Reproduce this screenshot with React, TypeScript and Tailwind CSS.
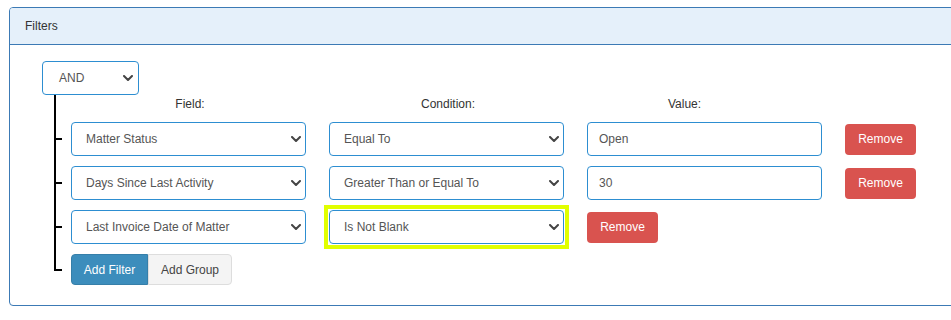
import React from "react";

const Chevron = () => (
  <svg width="10" height="6" viewBox="0 0 10 6" className="shrink-0">
    <path d="M1 1 L5 5 L9 1" stroke="#444" strokeWidth="2" fill="none" strokeLinecap="round" strokeLinejoin="round" />
  </svg>
);

const Select = ({ text, w = "w-[235px]" }: { text: string; w?: string }) => (
  <div className={`flex h-[34px] ${w} items-center justify-between rounded-[4px] border border-[#2d8ed1] bg-white pl-[14px] pr-[4px] text-[12px] text-[#555]`}>
    <span>{text}</span>
    <Chevron />
  </div>
);

const Input = ({ value }: { value: string }) => (
  <div className="flex h-[34px] w-[235px] items-center rounded-[4px] border border-[#2d8ed1] bg-white pl-[11px] text-[12px] text-[#555]">
    {value}
  </div>
);

const RemoveBtn = () => (
  <div className="flex h-[31px] w-[71px] items-center justify-center rounded-[4px] bg-[#d9534f] text-[12px] text-white">
    Remove
  </div>
);

const Row = ({ children }: { children: React.ReactNode }) => (
  <div className="pb-[10px]">
    <div className="flex h-[34px] items-center">
      <div className="h-[2px] w-[6px] bg-black" />
      <div className="ml-[9px] flex items-center gap-[23px]">{children}</div>
    </div>
  </div>
);

export default function App() {
  return (
    <div className="h-[320px] w-[951px] overflow-hidden bg-white pl-[9px] pt-[7px] font-['Liberation_Sans',Arial,sans-serif]">
      <div className="w-[960px] rounded-[4px] border border-[#3c7ab5]">
        <div className="flex h-[37px] items-center rounded-t-[3px] border-b border-[#3c7ab5] bg-[#e5f0fa] pl-[15px] text-[12px] text-[#333]">
          Filters
        </div>
        <div className="pb-[20px] pl-[32px] pt-[16px]">
          <Select text="AND" w="w-[97px] !pl-[16px] !pr-[5px]" />
          <div className="ml-[12px]">
            <div className="border-l-2 border-black">
              <div className="flex h-[27px] pl-[15px] text-[12px] text-[#333]">
                <div className="w-[235px] pl-[3px] text-center">Field:</div>
                <div className="ml-[23px] w-[235px] pl-[3px] text-center">Condition:</div>
                <div className="ml-[23px] w-[235px] pr-[40px] text-center">Value:</div>
              </div>
              <Row>
                <Select text="Matter Status" />
                <Select text="Equal To" />
                <Input value="Open" />
                <RemoveBtn />
              </Row>
              <Row>
                <Select text="Days Since Last Activity" />
                <Select text="Greater Than or Equal To" />
                <Input value="30" />
                <RemoveBtn />
              </Row>
              <Row>
                <Select text="Last Invoice Date of Matter" />
                <div className="rounded-none outline-4 outline-solid outline-offset-1 outline-[#e1ff00]">
                  <Select text="Is Not Blank" />
                </div>
                <RemoveBtn />
              </Row>
            </div>
            <div className="flex h-[31px]">
              <div className="h-[17px] w-[8px] border-b-2 border-l-2 border-black" />
              <div className="ml-[9px] flex">
                <div className="flex h-[31px] w-[77px] items-center justify-center rounded-l-[4px] border border-[#367fa9] bg-[#3c8dbc] text-[12px] text-white">
                  Add Filter
                </div>
                <div className="flex h-[31px] w-[84px] items-center justify-center rounded-r-[4px] border border-[#ddd] bg-[#f4f4f4] text-[12px] text-[#444]">
                  Add Group
                </div>
              </div>
            </div>
          </div>
        </div>
      </div>
    </div>
  );
}
